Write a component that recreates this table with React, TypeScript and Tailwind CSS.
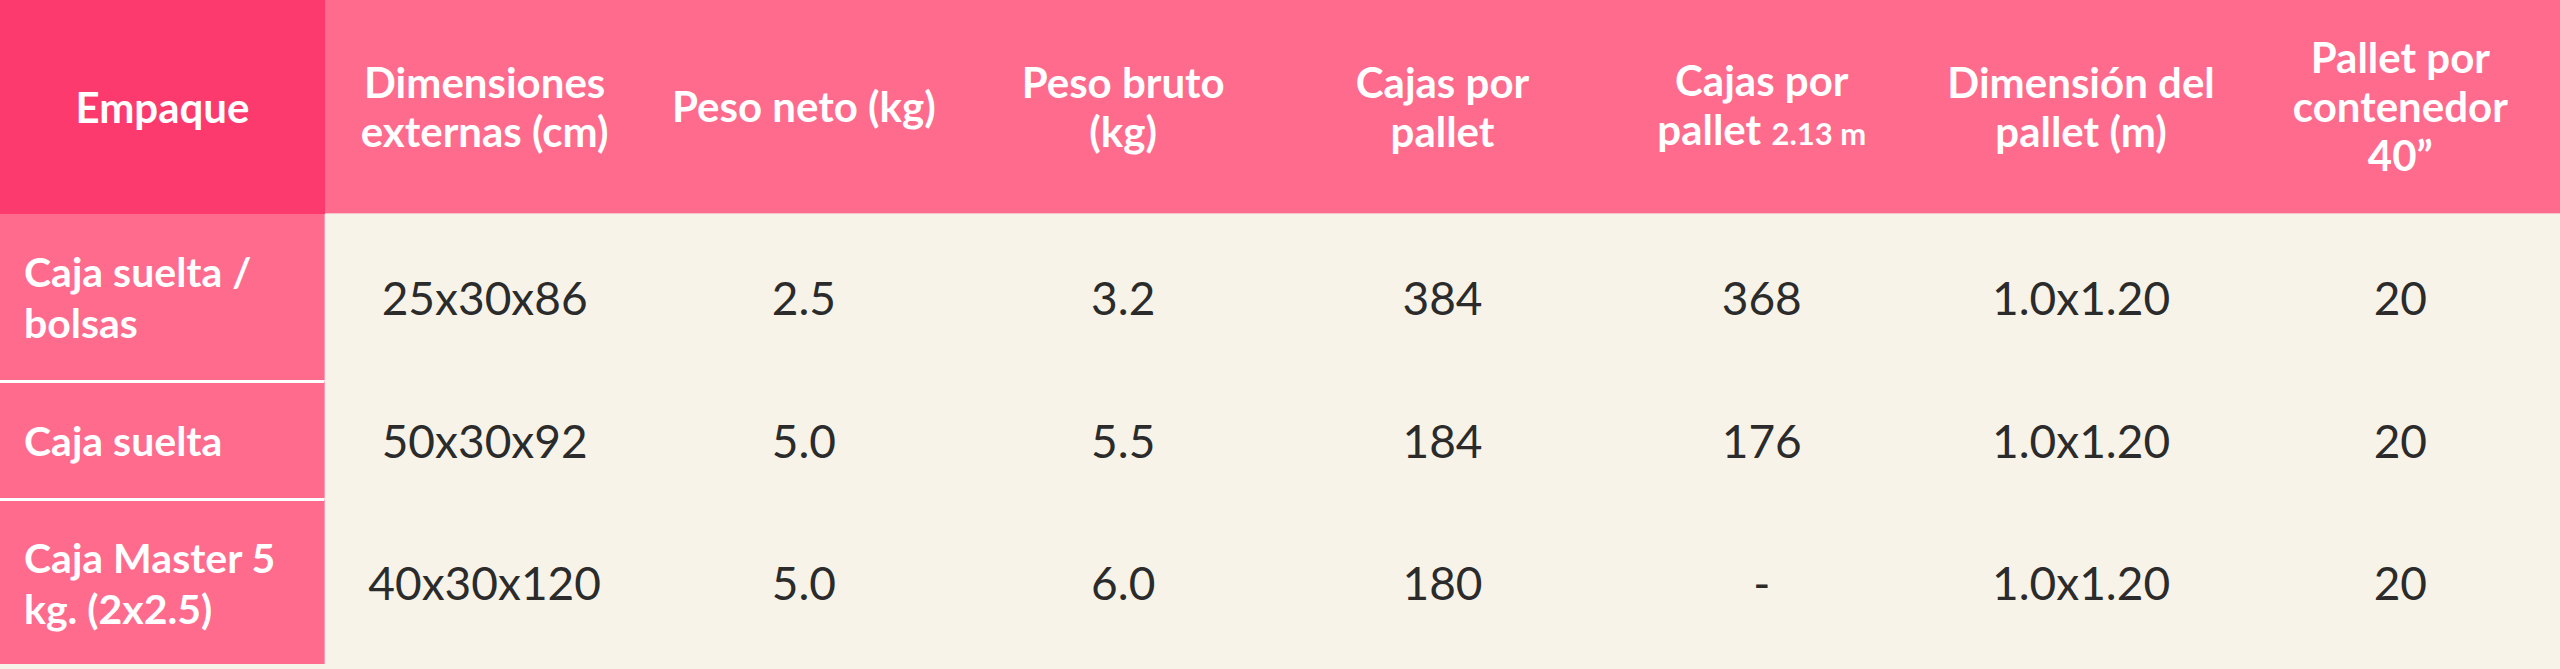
import { Fragment } from "react";

const headers = [
  <>Dimensiones<br />externas (cm)</>,
  <>Peso neto (kg)</>,
  <>Peso bruto<br />(kg)</>,
  <>Cajas por<br />pallet</>,
  <>Cajas por<br />pallet <span className="text-[31px]">2.13 m</span></>,
  <>Dimensión del<br />pallet (m)</>,
  <>Pallet por<br />contenedor<br />40”</>,
];

const rows = [
  { label: <>Caja suelta /<br />bolsas</>, h: "h-[166px]", cells: ["25x30x86", "2.5", "3.2", "384", "368", "1.0x1.20", "20"] },
  { label: <>Caja suelta</>, h: "h-[118px]", cells: ["50x30x92", "5.0", "5.5", "184", "176", "1.0x1.20", "20"] },
  { label: <>Caja Master 5<br />kg. (2x2.5)</>, h: "h-[166px]", cells: ["40x30x120", "5.0", "6.0", "180", "-", "1.0x1.20", "20"] },
];

export default function App() {
  return (
    <div className="w-[2560px] h-[669px] bg-[#f7f3e8] font-['Lato','Open_Sans',sans-serif] overflow-hidden">
      <div className="grid grid-cols-[325px_repeat(7,1fr)]">
        <div className="h-[214px] bg-[#fc3a6e] flex items-center justify-center text-white font-bold text-[42px] leading-[49px]">
          Empaque
        </div>
        {headers.map((h, i) => (
          <div key={i} className="h-[214px] bg-[#ff6b8d] border-b border-[#f9c3cc] flex items-center justify-center text-center text-white font-bold text-[42px] leading-[49px]">
            <div>{h}</div>
          </div>
        ))}

        {rows.map((r, ri) => (
          <Fragment key={ri}>
            <div className={`${r.h} ${ri > 0 ? "border-t-[3px] border-white" : ""} bg-[#ff6b8d] border-r border-r-[#ff9ab1] flex items-center pl-6 text-white font-bold text-[41px] leading-[51px]`}>
              <div>{r.label}</div>
            </div>
            {r.cells.map((c, ci) => (
              <div key={ci} className={`${r.h} ${ri > 0 ? "border-t-[3px] border-transparent" : ""} flex items-center justify-center text-[#2b2b2b] text-[46px]`}>
                {c}
              </div>
            ))}
          </Fragment>
        ))}
      </div>
    </div>
  );
}
